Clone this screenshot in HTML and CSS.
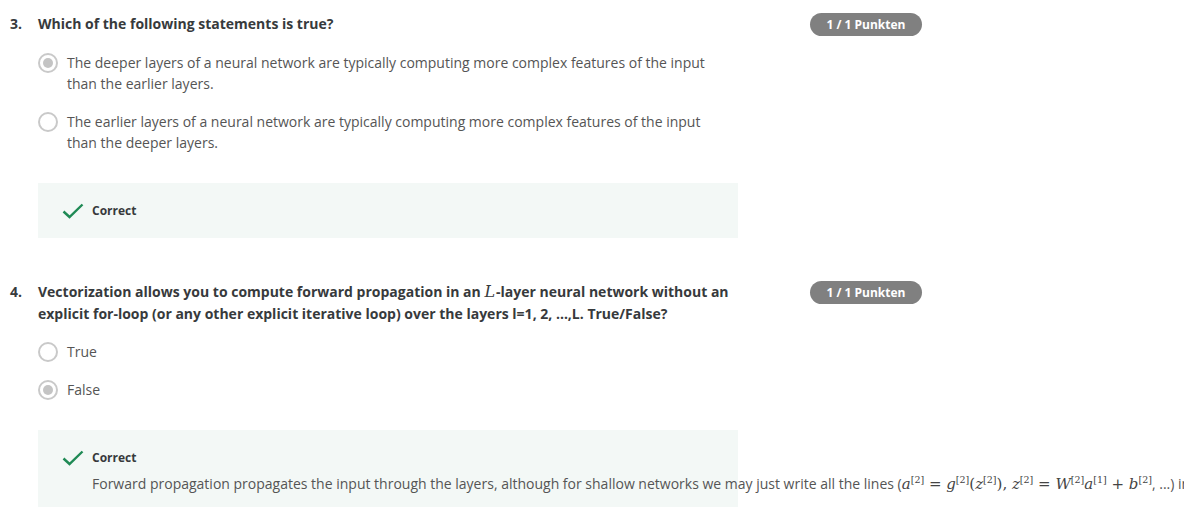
FILE: index.html
```html
<!DOCTYPE html>
<html>
<head>
<meta charset="utf-8">
<link rel="stylesheet" href="styles.css">
</head>
<body>
<div class="page">
  <section class="question q3">
    <div class="q-head">
      <span class="q-num">3.</span>
      <div class="q-text">Which of the following statements is true?</div>
      <span class="badge">1 / 1 Punkten</span>
    </div>
    <div class="options">
      <div class="option">
        <span class="radio checked"></span>
        <span class="opt-text">The deeper layers of a neural network are typically computing more complex features of the input than the earlier layers.</span>
      </div>
      <div class="option">
        <span class="radio"></span>
        <span class="opt-text">The earlier layers of a neural network are typically computing more complex features of the input than the deeper layers.</span>
      </div>
    </div>
    <div class="feedback fb1">
      <svg class="check" width="22" height="16" viewBox="0 0 22 16"><path d="M1.5 8.5 L7.5 14 L20.5 1.5" fill="none" stroke="#1f8a55" stroke-width="2.4"/></svg>
      <div class="fb-body">
        <div class="fb-title">Correct</div>
      </div>
    </div>
  </section>

  <section class="question q4">
    <div class="q-head">
      <span class="q-num">4.</span>
      <div class="q-text">Vectorization allows you to compute forward propagation in an <span class="math">L</span>-layer neural network without an explicit for-loop (or any other explicit iterative loop) over the layers l=1, 2, …,L. True/False?</div>
      <span class="badge">1 / 1 Punkten</span>
    </div>
    <div class="options">
      <div class="option">
        <span class="radio"></span>
        <span class="opt-text">True</span>
      </div>
      <div class="option">
        <span class="radio checked"></span>
        <span class="opt-text">False</span>
      </div>
    </div>
    <div class="feedback fb2">
      <svg class="check" width="22" height="16" viewBox="0 0 22 16"><path d="M1.5 8.5 L7.5 14 L20.5 1.5" fill="none" stroke="#1f8a55" stroke-width="2.4"/></svg>
      <div class="fb-body">
        <div class="fb-title">Correct</div>
        <div class="fb-text">Forward propagation propagates the input through the layers, although for shallow networks we may just write all the lines (<span class="m"><i>a</i><sup>[2]</sup> = <i>g</i><sup>[2]</sup>(<i>z</i><sup>[2]</sup>), <i>z</i><sup>[2]</sup> = <i>W</i><sup>[2]</sup><i>a</i><sup>[1]</sup> + <i>b</i><sup>[2]</sup></span>, ...) in a shallow neural network.</div>
      </div>
    </div>
  </section>
</div>
</body>
</html>
```

FILE: styles.css
```css
html, body {
  margin: 0;
  padding: 0;
  overflow: hidden;
  background: #ffffff;
}
body {
  font-family: "Open Sans", "Liberation Sans", sans-serif;
  color: #333333;
  width: 1184px;
}
.page {
  padding: 13px 0 0 10px;
}
.question {
  display: flex;
  flex-direction: column;
}
.q4 {
  margin-top: 43px;
}
.q-head {
  display: flex;
  align-items: flex-start;
}
.q-num {
  width: 28px;
  flex: none;
  font-weight: 700;
  font-size: 14px;
  line-height: 22px;
  color: #373a3c;
}
.q-text {
  width: 700px;
  flex: none;
  font-weight: 700;
  font-size: 14px;
  line-height: 22px;
  color: #373a3c;
}
.math {
  font-family: "DejaVu Serif", "Liberation Serif", serif;
  font-style: italic;
  font-weight: 400;
  font-size: 16px;
  margin-right: 1px;
}
.badge {
  margin-left: 72px;
  flex: none;
  width: 112px;
  height: 23px;
  margin-top: 0;
  border-radius: 12px;
  background: #808080;
  color: #ffffff;
  font-weight: 700;
  font-size: 12px;
  line-height: 23px;
  text-align: center;
}
.options {
  margin-left: 28px;
  margin-top: 16px;
  display: flex;
  flex-direction: column;
  gap: 17px;
}
.option {
  display: flex;
  align-items: flex-start;
}
.radio {
  flex: none;
  box-sizing: border-box;
  width: 20px;
  height: 20px;
  border: 2px solid #c9c9c9;
  border-radius: 50%;
  margin-top: 1px;
  display: flex;
  align-items: center;
  justify-content: center;
}
.radio.checked::after {
  content: "";
  width: 10px;
  height: 10px;
  border-radius: 50%;
  background: #c4c4c4;
}
.opt-text {
  margin-left: 9px;
  width: 650px;
  font-size: 14px;
  line-height: 21px;
  color: #555555;
}
.feedback {
  margin-left: 28px;
  width: 700px;
  background: #f3f8f6;
  display: flex;
  align-items: flex-start;
  box-sizing: border-box;
  padding-left: 24px;
}
.fb1 {
  margin-top: 30px;
  height: 55px;
  padding-top: 19px;
}
.fb2 {
  margin-top: 30px;
  height: 77px;
  padding-top: 19px;
}
.check {
  flex: none;
  margin-top: 1px;
}
.fb-body {
  margin-left: 8px;
}
.fb-title {
  font-weight: 700;
  font-size: 12px;
  line-height: 18px;
  color: #373a3c;
}
.fb-text {
  margin-top: 6px;
  font-size: 14px;
  line-height: 22px;
  color: #555555;
  white-space: nowrap;
}
.m {
  font-family: "DejaVu Serif", "Liberation Serif", serif;
  font-size: 15px;
  color: #444;
}
.m i {
  font-style: italic;
}
.m sup {
  font-style: normal;
  font-size: 9.5px;
  vertical-align: 6px;
  line-height: 0;
}
```
